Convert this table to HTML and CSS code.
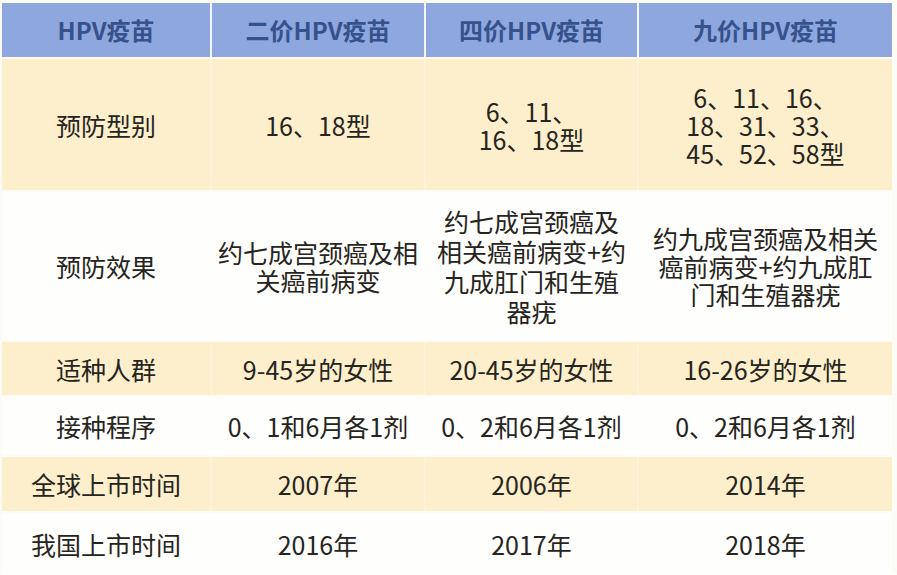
FILE: index.html
```html
<!DOCTYPE html>
<html lang="zh-CN">
<head>
<meta charset="utf-8">
<title>HPV疫苗对比</title>
<link rel="stylesheet" href="styles.css">
</head>
<body>
<div class="table">
  <div class="row head">
    <div class="cell">HPV疫苗</div>
    <div class="cell">二价HPV疫苗</div>
    <div class="cell">四价HPV疫苗</div>
    <div class="cell">九价HPV疫苗</div>
  </div>
  <div class="row cream r-types">
    <div class="cell">预防型别</div>
    <div class="cell">16、18型</div>
    <div class="cell"><span class="ln">6、11、</span><span class="ln">16、18型</span></div>
    <div class="cell"><span class="ln">6、11、16、</span><span class="ln">18、31、33、</span><span class="ln">45、52、58型</span></div>
  </div>
  <div class="row white r-effect">
    <div class="cell">预防效果</div>
    <div class="cell"><span class="ln">约七成宫颈癌及相</span><span class="ln">关癌前病变</span></div>
    <div class="cell tall"><span class="ln">约七成宫颈癌及</span><span class="ln">相关癌前病变+约</span><span class="ln">九成肛门和生殖</span><span class="ln">器疣</span></div>
    <div class="cell"><span class="ln">约九成宫颈癌及相关</span><span class="ln">癌前病变+约九成肛</span><span class="ln">门和生殖器疣</span></div>
  </div>
  <div class="row cream r-people">
    <div class="cell">适种人群</div>
    <div class="cell">9-45岁的女性</div>
    <div class="cell">20-45岁的女性</div>
    <div class="cell">16-26岁的女性</div>
  </div>
  <div class="row white r-schedule">
    <div class="cell">接种程序</div>
    <div class="cell">0、1和6月各1剂</div>
    <div class="cell">0、2和6月各1剂</div>
    <div class="cell">0、2和6月各1剂</div>
  </div>
  <div class="row cream r-global">
    <div class="cell">全球上市时间</div>
    <div class="cell">2007年</div>
    <div class="cell">2006年</div>
    <div class="cell">2014年</div>
  </div>
  <div class="row white r-china">
    <div class="cell">我国上市时间</div>
    <div class="cell">2016年</div>
    <div class="cell">2017年</div>
    <div class="cell">2018年</div>
  </div>
</div>
</body>
</html>
```
FILE: styles.css
```css
html, body {
  margin: 0;
  padding: 0;
  background: #fefefc;
}
body {
  width: 897px;
  height: 575px;
  overflow: hidden;
  font-family: "Noto Sans CJK SC", "Noto Sans", sans-serif;
  color: #262420;
}
.table {
  display: flex;
  flex-direction: column;
  gap: 2px;
  padding: 3px 5px 0 2px;
  background: #fcfbf5;
}
.row {
  display: grid;
  grid-template-columns: 208px 212px 211px 253px;
  column-gap: 2px;
}
.cell {
  display: flex;
  flex-direction: column;
  align-items: center;
  justify-content: center;
  text-align: center;
  font-size: 25px;
  line-height: 28px;
  white-space: nowrap;
}
.ln {
  display: block;
  height: 28px;
  line-height: 28px;
}
.head {
  height: 54px;
  background: #f4f6fb;
}
.head .cell {
  background: #8ea8df;
  color: #36528d;
  font-weight: bold;
  font-size: 24px;
}
.cream {
  background: #fdf3d8;
}
.cream .cell {
  background: #fdefcc;
}
.white {
  background: #fefefb;
}
.white .cell {
  background: #fefefc;
}
.tall .ln {
  height: 30px;
  line-height: 30px;
}
.r-types { height: 131px; }
.r-effect { height: 148px; }
.r-people { height: 53px; }
.r-schedule { height: 58px; }
.r-global { height: 54px; }
.r-china { height: 61px; }
```
